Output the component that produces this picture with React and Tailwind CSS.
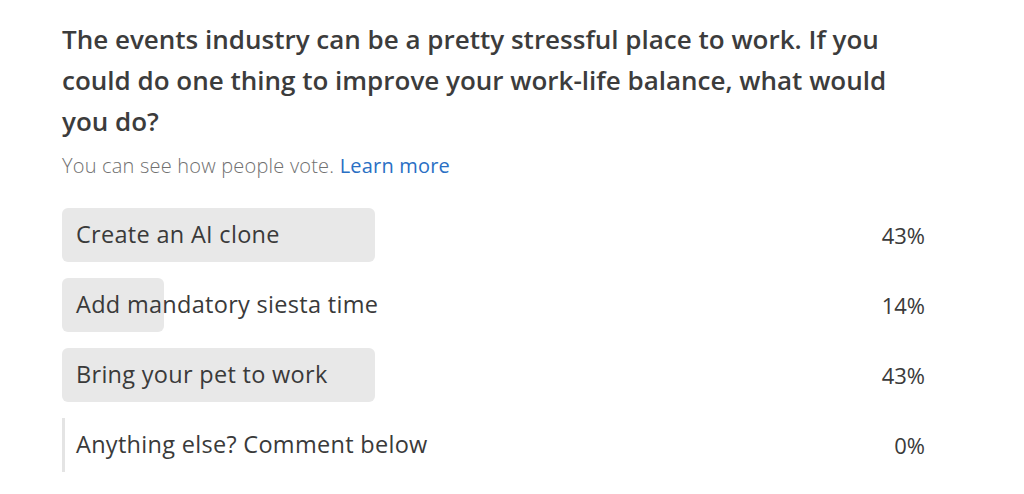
import React from "react";

const options = [
  { label: "Create an AI clone", pct: 43 },
  { label: "Add mandatory siesta time", pct: 14 },
  { label: "Bring your pet to work", pct: 43 },
  { label: "Anything else? Comment below", pct: 0 },
];

export default function App() {
  return (
    <div
      className="w-[1024px] h-[494px] bg-white pl-[62px] pt-[19px] text-[#404040]"
      style={{ fontFamily: '"Open Sans", "Noto Sans", sans-serif' }}
    >
      <h1 className="w-[850px] text-[26px] leading-[41px] font-semibold text-[#3c3c3c]">
        The events industry can be a pretty stressful place to work. If you could do one thing to improve your work-life balance, what would you do?
      </h1>
      <div className="text-[20px] leading-[24px] mt-[12px] font-light text-[#707070] tracking-[0.2px]">
        You can see how people vote.{" "}
        <span className="text-[#2a6fc4] font-normal">Learn more</span>
      </div>
      <div className="w-[863px] mt-[30px] flex flex-col gap-[16px]">
        {options.map((o) => (
          <div key={o.label} className="flex items-center h-[54px]">
            <div className="relative w-[728px] h-full flex items-center">
              {o.pct > 0 ? (
                <div
                  className="absolute left-0 top-0 h-full bg-[#e8e8e8] rounded-[6px]"
                  style={{ width: `${o.pct}%` }}
                />
              ) : (
                <div className="absolute left-0 top-0 h-full w-[3px] bg-[#e4e4e4]" />
              )}
              <span className="relative pl-[14px] text-[23.5px] tracking-[0.3px] text-[#3a3a3a]">{o.label}</span>
            </div>
            <div className="flex-1 text-right text-[22px] text-[#3a3a3a]">{o.pct}%</div>
          </div>
        ))}
      </div>
    </div>
  );
}
